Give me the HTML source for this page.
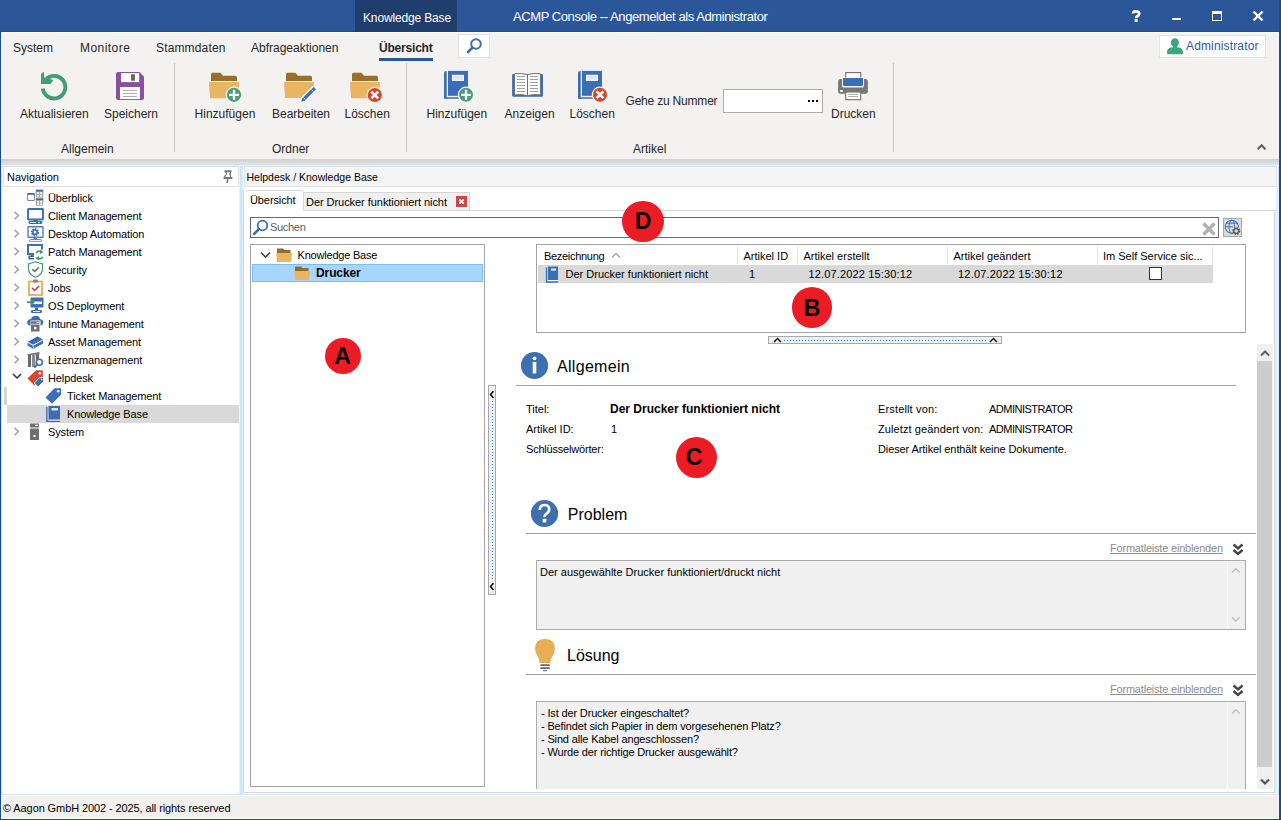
<!DOCTYPE html>
<html><head><meta charset="utf-8"><style>
html,body{margin:0;padding:0;}
body{width:1281px;height:820px;position:relative;overflow:hidden;font-family:"Liberation Sans",sans-serif;}
body>div,body>svg{position:absolute;}
.t{white-space:nowrap;line-height:1;}
</style></head><body>
<div style="left:0px;top:0px;width:1281px;height:820px;background:#1B4C95"></div>
<div style="left:1280px;top:0px;width:1px;height:820px;background:#0050AA"></div>
<div style="left:0px;top:0px;width:1279px;height:31px;background:#2B579A"></div>
<div style="left:0px;top:31px;width:1279px;height:1px;background:#24508F"></div>
<div style="left:355px;top:0px;width:102px;height:32px;background:#1F3D6D"></div>
<div class="t" style="left:363px;top:12.00px;font-size:12px;color:#fff;letter-spacing:-0.15px">Knowledge Base</div>
<div class="t" style="left:513px;top:10.00px;font-size:13px;color:#fff;letter-spacing:-0.42px">ACMP Console -- Angemeldet als Administrator</div>
<svg style="left:1131px;top:10px;" width="10" height="12" viewBox="0 0 10 12"><path d="M2 3.6 Q2 1.3 5 1.3 Q8.2 1.3 8.2 3.8 Q8.2 5.4 6.4 6.3 Q5.1 7 5.1 8.3" fill="none" stroke="#fff" stroke-width="2.7"/><rect x="3.6" y="9.2" width="3" height="2.7" fill="#fff"/></svg>
<div style="left:1172px;top:18px;width:9px;height:2px;background:#fff"></div>
<div style="left:1212px;top:11px;width:10px;height:10px;border:1.5px solid #fff;border-top-width:3px;box-sizing:border-box"></div>
<svg style="left:1252px;top:10px;" width="12" height="12" viewBox="0 0 12 12"><path d="M1.5 1.5 L10.5 10.5 M10.5 1.5 L1.5 10.5" stroke="#fff" stroke-width="2.4"/></svg>
<div style="left:1px;top:32px;width:1278px;height:127px;background:#F3F2F1;border:1px solid #FCFCFA;border-bottom:none;box-sizing:border-box"></div>
<div style="left:1px;top:159px;width:1278px;height:5px;background:linear-gradient(#CFCFCF,#E2E2E2)"></div>
<div style="left:1px;top:164px;width:1278px;height:631px;background:#CCE6FC"></div>
<div style="left:1px;top:165px;width:1278px;height:1px;background:#E0EFFC"></div>
<div style="left:1px;top:795px;width:1278px;height:24px;background:#F1F0EF;border:1px solid #FCFCFA;box-sizing:border-box"></div>
<div class="t" style="left:3px;top:803.00px;font-size:11px;color:#000;letter-spacing:-0.1px">© Aagon GmbH 2002 - 2025, all rights reserved</div>
<div class="t" style="left:13px;top:42.00px;font-size:12px;color:#262626;letter-spacing:0px">System</div>
<div class="t" style="left:80px;top:42.00px;font-size:12px;color:#262626;letter-spacing:0.45px">Monitore</div>
<div class="t" style="left:156px;top:42.00px;font-size:12px;color:#262626;letter-spacing:0.15px">Stammdaten</div>
<div class="t" style="left:251px;top:42.00px;font-size:12px;color:#262626;letter-spacing:0px">Abfrageaktionen</div>
<div class="t" style="left:379px;top:42.00px;font-size:12px;font-weight:bold;color:#262626;letter-spacing:-0.2px">Übersicht</div>
<div style="left:379px;top:58px;width:54px;height:3px;background:#2B579A"></div>
<div style="left:458px;top:34px;width:32px;height:24px;background:#fff;border:1px solid #E3E3E3;box-sizing:border-box"></div>
<svg style="left:466px;top:37px;" width="17" height="17" viewBox="0 0 17 17"><circle cx="10" cy="7" r="4.8" fill="none" stroke="#3C6EB4" stroke-width="2"/><path d="M6.5 10.5 L2 15" stroke="#3C6EB4" stroke-width="2.6" stroke-linecap="round"/></svg>
<div style="left:1159px;top:35px;width:107px;height:23px;background:#fff;border:1px solid #E3E3E3;box-sizing:border-box"></div>
<svg style="left:1166px;top:38px;" width="18" height="17" viewBox="0 0 18 17"><ellipse cx="8.9" cy="4.6" rx="4" ry="4.4" fill="#3FA57A"/><rect x="7" y="7" width="4" height="3" fill="#3FA57A"/><path d="M1 15 Q1 10.2 5 9.6 L7.2 9.2 H10.8 L13 9.6 Q17 10.2 17 15 Q17 16.2 15.5 16.2 H2.5 Q1 16.2 1 15 Z" fill="#3FA57A"/></svg>
<div class="t" style="left:1186px;top:40.00px;font-size:12px;color:#3556A8;letter-spacing:0.15px">Administrator</div>
<div style="left:174px;top:63px;width:1px;height:89px;background:#C6C6C6"></div>
<div style="left:406px;top:63px;width:1px;height:89px;background:#C6C6C6"></div>
<div style="left:893px;top:63px;width:1px;height:89px;background:#C6C6C6"></div>
<div class="t" style="left:20px;top:108.00px;font-size:12px;color:#262626">Aktualisieren</div>
<div class="t" style="left:104px;top:108.00px;font-size:12px;color:#262626">Speichern</div>
<div class="t" style="left:194.6px;top:108.00px;font-size:12px;color:#262626">Hinzufügen</div>
<div class="t" style="left:272px;top:108.00px;font-size:12px;color:#262626">Bearbeiten</div>
<div class="t" style="left:344.5px;top:108.00px;font-size:12px;color:#262626">Löschen</div>
<div class="t" style="left:426.5px;top:108.00px;font-size:12px;color:#262626">Hinzufügen</div>
<div class="t" style="left:504.6px;top:108.00px;font-size:12px;color:#262626">Anzeigen</div>
<div class="t" style="left:569.5px;top:108.00px;font-size:12px;color:#262626">Löschen</div>
<div class="t" style="left:831px;top:108.00px;font-size:12px;color:#262626">Drucken</div>
<div class="t" style="left:625.5px;top:95.00px;font-size:12px;color:#262626;letter-spacing:-0.2px">Gehe zu Nummer</div>
<div class="t" style="left:61px;top:143.00px;font-size:12px;color:#262626">Allgemein</div>
<div class="t" style="left:272px;top:143.00px;font-size:12px;color:#262626">Ordner</div>
<div class="t" style="left:633px;top:143.00px;font-size:12px;color:#262626">Artikel</div>
<div style="left:723px;top:89px;width:100px;height:24px;background:#fff;border:1px solid #ABABAB;box-sizing:border-box"></div>
<div style="left:808px;top:100px;width:2px;height:2px;background:#000"></div>
<div style="left:812px;top:100px;width:2px;height:2px;background:#000"></div>
<div style="left:816px;top:100px;width:2px;height:2px;background:#000"></div>
<svg style="left:1256px;top:143px;" width="12" height="8" viewBox="0 0 12 8"><path d="M1.7 6.3 L5.6 2.3 L9.5 6.3" fill="none" stroke="#5E5E5E" stroke-width="2"/></svg>
<svg style="left:38px;top:70px;" width="32" height="32" viewBox="0 0 32 32"><path d="M4.8 18.6 A11.3 11.3 0 1 0 8.3 8.9" fill="none" stroke="#479B78" stroke-width="3.9"/><path d="M3 4 L6 1.8 L6.2 7.5 L15.5 10 L12.5 14 L3 14 Z" fill="#479B78"/></svg>
<svg style="left:116px;top:72px;" width="28" height="28" viewBox="0 0 28 28"><path d="M2 0 H23.5 L28 4.5 V26 Q28 28 26 28 H2 Q0 28 0 26 V2 Q0 0 2 0 Z" fill="#8A4FA0"/><rect x="5" y="1.1" width="18.2" height="9" fill="#fff"/><rect x="15" y="2.2" width="4" height="6.5" rx="0.5" fill="#676767"/><rect x="4" y="15" width="20" height="12.1" fill="#fff"/><path d="M7 18.4 H20.8 M7 21.4 H20.8 M7 24.5 H20.8" stroke="#ABABAB" stroke-width="1"/></svg>
<svg style="left:205px;top:70px;" width="40" height="36" viewBox="0 0 40 36"><g transform="translate(4,2.7)"><path d="M3.5 0 H11.5 L14 3 H26.5 Q28 3 28 4.5 V8.3 H2 V1.5 Q2 0 3.5 0 Z" fill="#96712B"/><path d="M1 9.2 H29 Q30 9.2 30 10.2 L29 25.5 H1 L0 10.2 Q0 9.2 1 9.2 Z" fill="#E8B562"/></g><circle cx="29" cy="24.8" r="8.299999999999999" fill="#F3F2F1"/><circle cx="29" cy="24.8" r="7.1" fill="#4A9E7B"/><path d="M24 24.8 H34 M29 19.8 V29.8" stroke="#fff" stroke-width="2.3"/></svg>
<svg style="left:280px;top:70px;" width="40" height="36" viewBox="0 0 40 36"><path d="M7.5 2.7 H15.5 L18 5.7 H30.5 Q32 5.7 32 7.2 V11 H6 V4.2 Q6 2.7 7.5 2.7 Z" fill="#96712B"/><path d="M5 11.9 H33 Q34 11.9 34 12.9 V15.8 L22.3 27.9 H5 L4 12.9 Q4 11.9 5 11.9 Z" fill="#E8B562"/><path d="M22.2 30.8 L35.3 17.7" stroke="#F3F2F1" stroke-width="6"/><path d="M23.4 29.6 L34.8 18.2" stroke="#3C6EB4" stroke-width="3.3"/><path d="M21.2 31.8 L22.3 27.9 L25.1 30.7 Z" fill="#3C6EB4"/><path d="M31.6 19.6 L33.4 21.4 M23.6 27.6 L25.4 29.4" stroke="#F3F2F1" stroke-width="0.8"/></svg>
<svg style="left:346px;top:70px;" width="40" height="36" viewBox="0 0 40 36"><g transform="translate(4,2.7)"><path d="M3.5 0 H11.5 L14 3 H26.5 Q28 3 28 4.5 V8.3 H2 V1.5 Q2 0 3.5 0 Z" fill="#96712B"/><path d="M1 9.2 H29 Q30 9.2 30 10.2 L29 25.5 H1 L0 10.2 Q0 9.2 1 9.2 Z" fill="#E8B562"/></g><circle cx="28.8" cy="25" r="8.299999999999999" fill="#F3F2F1"/><circle cx="28.8" cy="25" r="7.1" fill="#D5472B"/><path d="M25.400000000000002 21.6 L32.2 28.4 M32.2 21.6 L25.400000000000002 28.4" stroke="#fff" stroke-width="2.6"/></svg>
<svg style="left:440px;top:70px;" width="40" height="36" viewBox="0 0 40 36"><path d="M4 3 Q4 0.9 6.7 0.9 V28.7 H4 Z" fill="#3C6EB4"/><rect x="8" y="0.9" width="20" height="24.9" fill="#3C6EB4"/><path d="M4 27.2 H20 V28.7 H6 Q4 28.7 4 27.2 Z" fill="#3C6EB4"/><rect x="11.9" y="4.8" width="12.1" height="6.1" fill="#fff"/><rect x="13" y="5.9" width="9.9" height="3.9" fill="#DCE6F0"/><circle cx="26" cy="24.8" r="8.2" fill="#F3F2F1"/><circle cx="26" cy="24.8" r="7" fill="#4A9E7B"/><path d="M21 24.8 H31 M26 19.8 V29.8" stroke="#fff" stroke-width="2.3"/></svg>
<svg style="left:574px;top:70px;" width="40" height="36" viewBox="0 0 40 36"><path d="M4 3 Q4 0.9 6.7 0.9 V28.7 H4 Z" fill="#3C6EB4"/><rect x="8" y="0.9" width="20" height="24.9" fill="#3C6EB4"/><path d="M4 27.2 H20 V28.7 H6 Q4 28.7 4 27.2 Z" fill="#3C6EB4"/><rect x="11.9" y="4.8" width="12.1" height="6.1" fill="#fff"/><rect x="13" y="5.9" width="9.9" height="3.9" fill="#DCE6F0"/><circle cx="26" cy="24.8" r="8.2" fill="#F3F2F1"/><circle cx="26" cy="24.8" r="7" fill="#D5472B"/><path d="M22.6 21.400000000000002 L29.4 28.2 M29.4 21.400000000000002 L22.6 28.2" stroke="#fff" stroke-width="2.6"/></svg>
<svg style="left:510px;top:72px;" width="34" height="26" viewBox="0 0 34 26"><rect x="2.1" y="2" width="30.9" height="22.7" rx="1.2" fill="#3C6EB4"/><path d="M4.6 1.8 Q11 0.8 17.5 2.6 V23.6 Q11 22 4.6 22.9 Z" fill="#fff" stroke="#707070" stroke-width="1"/><path d="M30.4 1.8 Q24 0.8 17.5 2.6 V23.6 Q24 22 30.4 22.9 Z" fill="#fff" stroke="#707070" stroke-width="1"/><path d="M7 4.5 H15 M20 4.5 H28 M7 7.5 H15 M20 7.5 H28 M7 10.5 H15 M20 10.5 H28 M7 13.5 H15 M20 13.5 H28 M7 16.5 H15 M20 16.5 H28 M7 19.5 H15 M20 19.5 H28" stroke="#A0A0A0" stroke-width="1"/></svg>
<svg style="left:836px;top:71px;" width="33" height="30" viewBox="0 0 33 30"><rect x="9.7" y="1.6" width="15" height="9" fill="#fff" stroke="#707070" stroke-width="1.1"/><rect x="2.1" y="7.9" width="29.8" height="14.9" rx="2.5" fill="#777"/><rect x="6" y="7" width="22" height="9.6" rx="2.2" fill="#F3F2F1"/><rect x="6" y="6.5" width="22" height="3" fill="#F3F2F1"/><rect x="7" y="7" width="20" height="8" rx="1.6" fill="#3C6EB4"/><rect x="7" y="7" width="20" height="3" fill="#3C6EB4"/><rect x="4" y="18.9" width="3" height="2" rx="0.8" fill="#fff"/><rect x="9.7" y="21" width="15" height="7.7" fill="#fff" stroke="#707070" stroke-width="1.1"/><path d="M12.2 23.4 H22 M12.2 25.5 H22" stroke="#A0A0A0" stroke-width="0.9"/></svg>
<div style="left:2px;top:166px;width:237px;height:628px;background:#fff"></div>
<div style="left:3px;top:166px;width:236px;height:21px;background:#fff;border:1px solid #E0E0E0;box-sizing:border-box"></div>
<div class="t" style="left:7px;top:172.00px;font-size:11px;color:#000">Navigation</div>
<svg style="left:221px;top:169px;" width="14" height="16" viewBox="0 0 14 16"><path d="M3.5 2.2 H10.5 M2.6 9 H11.4" stroke="#777" stroke-width="1.9"/><path d="M4.3 3 Q6.2 4.8 4.8 6.2 L3.2 8.2 M9.5 3 V8.2" fill="none" stroke="#777" stroke-width="1.2"/><rect x="8" y="4" width="1.5" height="2.5" fill="#999"/><path d="M6.6 10 L6.2 14" stroke="#777" stroke-width="1.6"/></svg>
<div style="left:7px;top:405px;width:232px;height:18px;background:#D9D9D9"></div>
<div style="left:4px;top:387px;width:3px;height:18px;background:#D4D4D4"></div>
<div class="t" style="left:48px;top:193.00px;font-size:11px;color:#000;letter-spacing:-0.12px">Überblick</div>
<div class="t" style="left:48px;top:211.00px;font-size:11px;color:#000;letter-spacing:-0.12px">Client Management</div>
<svg style="left:13px;top:211px;" width="8" height="9" viewBox="0 0 8 9"><path d="M1.5 0.8 L5.5 4.5 L1.5 8.2" fill="none" stroke="#9C9C9C" stroke-width="1.4"/></svg>
<div class="t" style="left:48px;top:229.00px;font-size:11px;color:#000;letter-spacing:-0.12px">Desktop Automation</div>
<svg style="left:13px;top:229px;" width="8" height="9" viewBox="0 0 8 9"><path d="M1.5 0.8 L5.5 4.5 L1.5 8.2" fill="none" stroke="#9C9C9C" stroke-width="1.4"/></svg>
<div class="t" style="left:48px;top:247.00px;font-size:11px;color:#000;letter-spacing:-0.12px">Patch Management</div>
<svg style="left:13px;top:247px;" width="8" height="9" viewBox="0 0 8 9"><path d="M1.5 0.8 L5.5 4.5 L1.5 8.2" fill="none" stroke="#9C9C9C" stroke-width="1.4"/></svg>
<div class="t" style="left:48px;top:265.00px;font-size:11px;color:#000;letter-spacing:-0.12px">Security</div>
<svg style="left:13px;top:265px;" width="8" height="9" viewBox="0 0 8 9"><path d="M1.5 0.8 L5.5 4.5 L1.5 8.2" fill="none" stroke="#9C9C9C" stroke-width="1.4"/></svg>
<div class="t" style="left:48px;top:283.00px;font-size:11px;color:#000;letter-spacing:-0.12px">Jobs</div>
<svg style="left:13px;top:283px;" width="8" height="9" viewBox="0 0 8 9"><path d="M1.5 0.8 L5.5 4.5 L1.5 8.2" fill="none" stroke="#9C9C9C" stroke-width="1.4"/></svg>
<div class="t" style="left:48px;top:301.00px;font-size:11px;color:#000;letter-spacing:-0.12px">OS Deployment</div>
<svg style="left:13px;top:301px;" width="8" height="9" viewBox="0 0 8 9"><path d="M1.5 0.8 L5.5 4.5 L1.5 8.2" fill="none" stroke="#9C9C9C" stroke-width="1.4"/></svg>
<div class="t" style="left:48px;top:319.00px;font-size:11px;color:#000;letter-spacing:-0.12px">Intune Management</div>
<svg style="left:13px;top:319px;" width="8" height="9" viewBox="0 0 8 9"><path d="M1.5 0.8 L5.5 4.5 L1.5 8.2" fill="none" stroke="#9C9C9C" stroke-width="1.4"/></svg>
<div class="t" style="left:48px;top:337.00px;font-size:11px;color:#000;letter-spacing:-0.12px">Asset Management</div>
<svg style="left:13px;top:337px;" width="8" height="9" viewBox="0 0 8 9"><path d="M1.5 0.8 L5.5 4.5 L1.5 8.2" fill="none" stroke="#9C9C9C" stroke-width="1.4"/></svg>
<div class="t" style="left:48px;top:355.00px;font-size:11px;color:#000;letter-spacing:-0.12px">Lizenzmanagement</div>
<svg style="left:13px;top:355px;" width="8" height="9" viewBox="0 0 8 9"><path d="M1.5 0.8 L5.5 4.5 L1.5 8.2" fill="none" stroke="#9C9C9C" stroke-width="1.4"/></svg>
<div class="t" style="left:48px;top:373.00px;font-size:11px;color:#000;letter-spacing:-0.12px">Helpdesk</div>
<svg style="left:12px;top:373px;" width="10" height="7" viewBox="0 0 10 7"><path d="M1 1 L5 5 L9 1" fill="none" stroke="#333" stroke-width="1.5"/></svg>
<div class="t" style="left:67px;top:391.00px;font-size:11px;color:#000;letter-spacing:-0.12px">Ticket Management</div>
<div class="t" style="left:67px;top:409.00px;font-size:11px;color:#000;letter-spacing:-0.12px">Knowledge Base</div>
<div class="t" style="left:48px;top:427.00px;font-size:11px;color:#000;letter-spacing:-0.12px">System</div>
<svg style="left:13px;top:427px;" width="8" height="9" viewBox="0 0 8 9"><path d="M1.5 0.8 L5.5 4.5 L1.5 8.2" fill="none" stroke="#9C9C9C" stroke-width="1.4"/></svg>
<svg style="left:27px;top:189px;" width="17" height="17" viewBox="0 0 17 17"><rect x="0.5" y="4.5" width="7" height="7" rx="1" fill="#fff" stroke="#8A8A8A" stroke-width="1.1"/><rect x="0.5" y="4" width="7" height="1.8" fill="#3C6EB4"/><rect x="8.8" y="1" width="7.5" height="7.5" rx="1" fill="#A0A0A0"/><rect x="8.8" y="0.6" width="7.5" height="1.8" fill="#3C6EB4"/><rect x="8.8" y="9.5" width="7.5" height="7.3" rx="1" fill="#A0A0A0"/><rect x="8.8" y="9.3" width="7.5" height="1.8" fill="#3C6EB4"/><rect x="10" y="3.2" width="2.2" height="1.8" fill="#fff"/><rect x="13" y="3.2" width="2.2" height="1.8" fill="#fff"/><rect x="10" y="5.8" width="2.2" height="1.8" fill="#fff"/><rect x="13" y="5.8" width="2.2" height="1.8" fill="#fff"/><rect x="10" y="11.8" width="2.2" height="1.8" fill="#fff"/><rect x="13" y="11.8" width="2.2" height="1.8" fill="#fff"/><rect x="10" y="14.4" width="2.2" height="1.6" fill="#fff"/><rect x="13" y="14.4" width="2.2" height="1.6" fill="#fff"/></svg>
<svg style="left:27px;top:207px;" width="17" height="17" viewBox="0 0 17 17"><rect x="1" y="2" width="15" height="10.5" rx="0.5" fill="none" stroke="#3C6EB4" stroke-width="1.9"/><rect x="6.5" y="12.5" width="4" height="1.6" fill="#3C6EB4"/><rect x="1.5" y="14" width="14" height="3" rx="1.4" fill="#3C6EB4"/><rect x="3" y="15.1" width="6" height="0.9" fill="#fff"/><rect x="11" y="15.1" width="2" height="0.9" fill="#fff"/></svg>
<svg style="left:27px;top:225px;" width="17" height="17" viewBox="0 0 17 17"><rect x="1" y="1.7" width="15" height="10.6" rx="0.5" fill="none" stroke="#4F7FC0" stroke-width="1.4"/><circle cx="8" cy="7.2" r="2.9" fill="none" stroke="#3C6EB4" stroke-width="2.4" stroke-dasharray="1.3 0.9"/><circle cx="8" cy="7.2" r="2.2" fill="none" stroke="#3C6EB4" stroke-width="1.6"/><rect x="6.5" y="12.6" width="3.5" height="1.6" fill="#4F7FC0"/><rect x="2.5" y="14.6" width="12" height="2.2" rx="1.1" fill="none" stroke="#4F7FC0" stroke-width="1"/></svg>
<svg style="left:27px;top:243px;" width="17" height="17" viewBox="0 0 17 17"><path d="M7 11 H1 V2 H15 V6.5" fill="none" stroke="#3C6EB4" stroke-width="2"/><rect x="4" y="11" width="2.5" height="2" fill="#3C6EB4"/><path d="M7 13.2 H2.2 V15.6 H7" fill="none" stroke="#3C6EB4" stroke-width="1.6"/><path d="M9 10 Q11 7.5 14.5 8.5" fill="none" stroke="#3E9A73" stroke-width="1.7"/><path d="M13 6.5 L16.5 9.3 L13 11 Z" fill="#3E9A73"/><path d="M16 14 Q14 16.5 10.5 15.5" fill="none" stroke="#3E9A73" stroke-width="1.7"/><path d="M12 13 L8.5 15 L12 17.5 Z" fill="#3E9A73"/></svg>
<svg style="left:27px;top:261px;" width="17" height="17" viewBox="0 0 17 17"><path d="M8.5 0.8 L15.5 3 V8 Q15.5 13.5 8.5 16.2 Q1.5 13.5 1.5 8 V3 Z" fill="none" stroke="#3E9A73" stroke-width="1.2"/><path d="M5.2 8.2 L7.7 10.5 L11.8 6.2" fill="none" stroke="#666" stroke-width="1.5"/></svg>
<svg style="left:27px;top:279px;" width="17" height="17" viewBox="0 0 17 17"><rect x="2" y="2.5" width="13" height="13.5" fill="#fff" stroke="#E8AE55" stroke-width="1.8"/><rect x="6" y="0.5" width="5" height="3" rx="1" fill="#888"/><path d="M5 9 L7.7 11.5 L12 7" fill="none" stroke="#D33B2C" stroke-width="1.6"/></svg>
<svg style="left:27px;top:297px;" width="17" height="17" viewBox="0 0 17 17"><rect x="3.5" y="0.5" width="13" height="10" rx="1" fill="#3C6EB4"/><rect x="6" y="4.5" width="9" height="2.6" fill="#fff"/><rect x="8" y="10.5" width="3" height="2.5" fill="#3C6EB4"/><rect x="4" y="13" width="11" height="3" rx="1.3" fill="#3C6EB4"/><rect x="6" y="14" width="7" height="0.9" fill="#fff"/><path d="M0 5.2 H6" stroke="#3E9A73" stroke-width="1.8"/><path d="M4.5 2.2 L8 5.2 L4.5 8.2 Z" fill="#3E9A73"/></svg>
<svg style="left:27px;top:315px;" width="17" height="17" viewBox="0 0 17 17"><path d="M2.5 10.5 Q0 10 0.3 6.8 Q0.8 4 4 4 Q5 0.8 9 0.8 Q12.5 1 13.2 4.2 Q16.5 4.5 16.3 7.5 Q16 10 13.5 10.5 V5.5 H3.5 V10.5 Z" fill="#3C6EB4"/><rect x="4" y="6.2" width="8.5" height="2.6" fill="#6E6E6E"/><rect x="9.5" y="6.9" width="2.2" height="1.1" fill="#fff"/><rect x="4" y="9.5" width="8.5" height="7" fill="#6E6E6E"/><rect x="7" y="11.8" width="2.5" height="2.5" fill="#fff"/></svg>
<svg style="left:27px;top:333px;" width="17" height="17" viewBox="0 0 17 17"><path d="M0.5 9 L10.5 3.5 L16 6.5 L6 12 Z" fill="#3C6EB4"/><path d="M0.5 9.5 V12.5 L6 15.8 V12.5 Z" fill="#3C6EB4"/><path d="M6.5 12.5 V15.8 L16 10.5 V7 Z" fill="#3C6EB4"/><path d="M0.8 9.4 L6.2 12.3 L15.8 7" fill="none" stroke="#fff" stroke-width="0.8"/><path d="M6.2 12.3 V16" stroke="#9BB8E0" stroke-width="0.8"/><path d="M2.5 8.8 L10.5 4.2" stroke="#3060A0" stroke-width="0.6"/></svg>
<svg style="left:27px;top:351px;" width="17" height="17" viewBox="0 0 17 17"><path d="M0.5 3 L12.5 1 V3.2 L0.5 4.5 Z" fill="#7A7A7A"/><rect x="1" y="4" width="3" height="12" fill="#6A6A6A"/><rect x="5" y="3.5" width="3.2" height="12.5" fill="#8A8A8A"/><rect x="9" y="3" width="3" height="8" fill="#6A6A6A"/><circle cx="12.3" cy="11.2" r="3" fill="#fff" stroke="#3C6EB4" stroke-width="1.6"/><path d="M10.2 13.3 L7.8 16" stroke="#3C6EB4" stroke-width="1.9" stroke-linecap="round"/></svg>
<svg style="left:27px;top:369px;" width="17" height="17" viewBox="0 0 17 17"><path d="M0.5 9.5 L9 1.2 H15.8 V8 L7.5 16.5 Z" fill="#D6492F"/><circle cx="12.8" cy="4.2" r="1.3" fill="#fff"/><path d="M7.2 14 L12.5 8.6 H16.6 V12.6 L11.2 18 Z" fill="#3C6EB4" stroke="#fff" stroke-width="1"/><circle cx="14.6" cy="10.6" r="0.8" fill="#fff"/></svg>
<svg style="left:45px;top:387px;" width="17" height="17" viewBox="0 0 17 17"><path d="M0.5 10.5 L9.5 1.2 H16 V7.8 L7 16.8 Z" fill="#3C6EB4"/><circle cx="13.2" cy="4.2" r="1.3" fill="#fff"/></svg>
<svg style="left:45px;top:405px;" width="17" height="17" viewBox="0 0 17 17"><path d="M3.5 1 H15 V15 H3.5 Z" fill="#3C6EB4"/><path d="M1.8 2 V16.2 H15" fill="none" stroke="#3C6EB4" stroke-width="1.4"/><rect x="3.5" y="14.6" width="11.5" height="0.9" fill="#fff"/><rect x="6.5" y="3" width="6.5" height="2.5" fill="#D6E4F0"/></svg>
<svg style="left:27px;top:423px;" width="17" height="17" viewBox="0 0 17 17"><rect x="3" y="0.5" width="9" height="4" fill="#707070"/><rect x="8" y="1.7" width="3" height="1.3" fill="#fff"/><rect x="3" y="5.5" width="9" height="11.5" fill="#707070"/><rect x="6.5" y="12" width="2" height="2" fill="#fff"/></svg>
<div style="left:239px;top:166px;width:4px;height:627px;background:linear-gradient(90deg,#EAF5FE 0 1px,#CCE6FC 1px 3px,#DCEEFC 3px 4px)"></div>
<div style="left:243px;top:166px;width:1035px;height:628px;background:#fff"></div>
<div style="left:1275px;top:210px;width:1px;height:583px;background:#EFEFEF"></div>
<div style="left:1276px;top:187px;width:3px;height:606px;background:#E0F1FD"></div>
<div style="left:244px;top:166px;width:1033px;height:21px;background:#F5F5F5;border:1px solid #E2E2E2;box-sizing:border-box"></div>
<div class="t" style="left:246.5px;top:172.00px;font-size:10.5px;color:#000">Helpdesk / Knowledge Base</div>
<div style="left:243px;top:210px;width:1032px;height:583px;background:#fff;border:1px solid #D6D6D6;box-sizing:border-box"></div>
<div style="left:243px;top:190px;width:1px;height:20px;background:#D6D6D6"></div>
<div style="left:303px;top:192px;width:167px;height:18px;background:#F0F0F0;border:1px solid #D6D6D6;border-bottom:none;box-sizing:border-box"></div>
<div style="left:244px;top:190px;width:59px;height:21px;background:#fff"></div>
<div style="left:247px;top:190px;width:56px;height:1px;background:#D6D6D6"></div>
<div class="t" style="left:250px;top:195.00px;font-size:11px;color:#000;letter-spacing:-0.1px">Übersicht</div>
<div class="t" style="left:306px;top:197.00px;font-size:11px;color:#000;letter-spacing:-0.05px">Der Drucker funktioniert nicht</div>
<div style="left:456px;top:196px;width:11px;height:11px;background:#CC4646"></div>
<svg style="left:456px;top:196px;" width="11" height="11" viewBox="0 0 11 11"><path d="M3.3 3.5 L7.7 7.5 M7.7 3.5 L3.3 7.5" stroke="#fff" stroke-width="1.7"/></svg>
<div style="left:250px;top:217px;width:969px;height:21px;background:#fff;border:1px solid #6A6A6A;box-sizing:border-box"></div>
<svg style="left:252px;top:219px;" width="17" height="17" viewBox="0 0 17 17"><circle cx="10.5" cy="6.5" r="4.8" fill="none" stroke="#3C6EB4" stroke-width="1.8"/><path d="M7 10 L2 15" stroke="#3C6EB4" stroke-width="2.5" stroke-linecap="round"/></svg>
<div class="t" style="left:270px;top:222.00px;font-size:11px;color:#5E5E5E;letter-spacing:-0.3px">Suchen</div>
<svg style="left:1201px;top:221px;" width="16" height="16" viewBox="0 0 16 16"><path d="M2.5 2.5 L13.5 13.5 M13.5 2.5 L2.5 13.5" stroke="#B0B0B0" stroke-width="3.2"/></svg>
<div style="left:1223px;top:218px;width:19px;height:19px;background:#DADADA;border:1px solid #A8A8A8;box-sizing:border-box"></div>
<svg style="left:1224px;top:219px;" width="17" height="17" viewBox="0 0 17 17"><circle cx="7.8" cy="7.8" r="6.6" fill="none" stroke="#3C78C8" stroke-width="1.1"/><ellipse cx="7.8" cy="7.8" rx="2.8" ry="6.6" fill="none" stroke="#3C78C8" stroke-width="1"/><path d="M1.2 7.8 H9 M2.2 4.2 H13.4" stroke="#3C78C8" stroke-width="1"/><circle cx="12.2" cy="12" r="4.3" fill="#DADADA"/><circle cx="12.2" cy="12" r="3.2" fill="none" stroke="#5A5A5A" stroke-width="1.8" stroke-dasharray="1.5 1"/><circle cx="12.2" cy="12" r="2.4" fill="none" stroke="#5A5A5A" stroke-width="1.4"/></svg>
<div style="left:250px;top:244px;width:235px;height:543px;background:#fff;border:1px solid #A3A3A8;box-sizing:border-box"></div>
<svg style="left:260px;top:251px;" width="11" height="8" viewBox="0 0 11 8"><path d="M1 1.5 L5.5 6 L10 1.5" fill="none" stroke="#444" stroke-width="1.6"/></svg>
<svg style="left:276px;top:248px;" width="17" height="15" viewBox="0 0 17 15"><path d="M1 0.5 H7 L8.5 2 H14.5 V5 H1 Z" fill="#8E6E2B"/><path d="M0.2 5 H16 L15.2 14 H1 Z" fill="#E8B562"/></svg>
<div class="t" style="left:297.5px;top:250.00px;font-size:11px;color:#000;letter-spacing:-0.2px">Knowledge Base</div>
<div style="left:252px;top:264px;width:231px;height:18px;background:#A6D6FC;border:1px solid #78BEF7;box-sizing:border-box"></div>
<svg style="left:294px;top:266px;" width="17" height="15" viewBox="0 0 17 15"><path d="M1 0.5 H7 L8.5 2 H14.5 V5 H1 Z" fill="#8E6E2B"/><path d="M0.2 5 H16 L15.2 14 H1 Z" fill="#E8B562"/></svg>
<div class="t" style="left:316px;top:267.00px;font-size:12px;font-weight:bold;color:#000;letter-spacing:-0.1px">Drucker</div>
<div style="left:488px;top:385px;width:8px;height:210px;background:#F0F0F0;border:1px solid #A8A8A8;box-sizing:border-box"></div>
<svg style="left:489px;top:390px;" width="6" height="10" viewBox="0 0 6 10"><path d="M4.4 1.3 L1.6 4.6 L4.4 7.9" fill="none" stroke="#000" stroke-width="1.5"/></svg>
<svg style="left:489px;top:582px;" width="6" height="10" viewBox="0 0 6 10"><path d="M4.4 1.3 L1.6 4.6 L4.4 7.9" fill="none" stroke="#000" stroke-width="1.5"/></svg>
<div style="left:492px;top:401px;width:1px;height:178px;background:repeating-linear-gradient(#1E88E5 0 1px,transparent 1px 3px)"></div>
<div style="left:536px;top:244px;width:710px;height:89px;background:#fff;border:1px solid #A3A3A8;box-sizing:border-box"></div>
<div style="left:737px;top:246px;width:1px;height:19px;background:#E5E5E5"></div>
<div style="left:797px;top:246px;width:1px;height:19px;background:#E5E5E5"></div>
<div style="left:947px;top:246px;width:1px;height:19px;background:#E5E5E5"></div>
<div style="left:1097px;top:246px;width:1px;height:19px;background:#E5E5E5"></div>
<div style="left:1212px;top:246px;width:1px;height:19px;background:#E5E5E5"></div>
<div class="t" style="left:544px;top:251.00px;font-size:11px;color:#000;letter-spacing:-0.3px">Bezeichnung</div>
<svg style="left:611px;top:252px;" width="10" height="7" viewBox="0 0 10 7"><path d="M1 5.5 L5 1.5 L9 5.5" fill="none" stroke="#555" stroke-width="1"/></svg>
<div class="t" style="left:743.5px;top:251.00px;font-size:11px;color:#000">Artikel ID</div>
<div class="t" style="left:803.5px;top:251.00px;font-size:11px;color:#000">Artikel erstellt</div>
<div class="t" style="left:953.5px;top:251.00px;font-size:11px;color:#000">Artikel geändert</div>
<div class="t" style="left:1103px;top:251.00px;font-size:11px;color:#000">Im Self Service sic...</div>
<div style="left:538px;top:265px;width:675px;height:18px;background:#D9D9D9"></div>
<svg style="left:545px;top:266px;" width="14" height="17" viewBox="0 0 14 17"><path d="M3 0.5 H13 V14 H3 Z" fill="#3C6EB4"/><path d="M1.5 1.5 V16 H13" fill="none" stroke="#3C6EB4" stroke-width="1.3"/><rect x="3" y="14" width="10" height="1" fill="#fff"/><rect x="6" y="2.5" width="5" height="2.2" fill="#D6E4F0"/></svg>
<div class="t" style="left:565.5px;top:269.00px;font-size:11px;color:#000">Der Drucker funktioniert nicht</div>
<div class="t" style="left:749px;top:269.00px;font-size:11px;color:#000">1</div>
<div class="t" style="left:808.5px;top:269.00px;font-size:11px;color:#000;letter-spacing:0.15px">12.07.2022 15:30:12</div>
<div class="t" style="left:958px;top:269.00px;font-size:11px;color:#000;letter-spacing:0.2px">12.07.2022 15:30:12</div>
<div style="left:1149px;top:267px;width:13px;height:13px;background:#fff;border:1px solid #333;box-sizing:border-box"></div>
<div style="left:768px;top:336px;width:234px;height:8px;background:#F0F0F0;border:1px solid #A8A8A8;box-sizing:border-box"></div>
<svg style="left:773px;top:337px;" width="10" height="6" viewBox="0 0 10 6"><path d="M1 5 L4.5 1.5 L8 5" fill="none" stroke="#000" stroke-width="1.4"/></svg>
<svg style="left:989px;top:337px;" width="10" height="6" viewBox="0 0 10 6"><path d="M1 5 L4.5 1.5 L8 5" fill="none" stroke="#000" stroke-width="1.4"/></svg>
<div style="left:784px;top:340px;width:202px;height:1px;background:repeating-linear-gradient(90deg,#1E88E5 0 1px,transparent 1px 3px)"></div>
<svg style="left:520px;top:351px;" width="29" height="29" viewBox="0 0 29 29"><circle cx="14.5" cy="14.5" r="13.6" fill="#3D70AE"/><circle cx="14.5" cy="7.3" r="1.9" fill="#fff"/><rect x="12.7" y="11" width="3.6" height="11.5" fill="#fff"/></svg>
<div class="t" style="left:557px;top:359.00px;font-size:16px;color:#000;letter-spacing:0.3px">Allgemein</div>
<div style="left:516px;top:385px;width:720px;height:1px;background:#A0A0A0"></div>
<div class="t" style="left:526px;top:404.00px;font-size:11px;color:#000">Titel:</div>
<div class="t" style="left:610px;top:403.00px;font-size:12px;font-weight:bold;color:#000">Der Drucker funktioniert nicht</div>
<div class="t" style="left:526px;top:424.00px;font-size:11px;color:#000">Artikel ID:</div>
<div class="t" style="left:611px;top:424.00px;font-size:11px;color:#000">1</div>
<div class="t" style="left:526px;top:444.00px;font-size:11px;color:#000;letter-spacing:-0.2px">Schlüsselwörter:</div>
<div class="t" style="left:878px;top:404.00px;font-size:11px;color:#000;letter-spacing:0.15px">Erstellt von:</div>
<div class="t" style="left:989px;top:404.00px;font-size:11px;color:#000;letter-spacing:-0.5px">ADMINISTRATOR</div>
<div class="t" style="left:878px;top:424.00px;font-size:11px;color:#000;letter-spacing:0.1px">Zuletzt geändert von:</div>
<div class="t" style="left:989px;top:424.00px;font-size:11px;color:#000;letter-spacing:-0.5px">ADMINISTRATOR</div>
<div class="t" style="left:878px;top:444.00px;font-size:11px;color:#000;letter-spacing:-0.1px">Dieser Artikel enthält keine Dokumente.</div>
<svg style="left:530px;top:499px;" width="29" height="29" viewBox="0 0 29 29"><circle cx="14.5" cy="14.5" r="13.6" fill="#3D70AE"/><path d="M9.8 11 Q9.8 6 14.5 6 Q19.2 6 19.2 10.5 Q19.2 13 16.5 14.6 Q14.5 15.8 14.5 18" fill="none" stroke="#fff" stroke-width="2.6"/><rect x="12.6" y="19.8" width="3.8" height="3.6" fill="#fff"/></svg>
<div class="t" style="left:567.8px;top:507.00px;font-size:16px;color:#000">Problem</div>
<div style="left:526px;top:533px;width:730px;height:1px;background:#A0A0A0"></div>
<div class="t" style="left:1110px;top:543.00px;font-size:11px;color:#8C8C8C;text-decoration:underline;letter-spacing:-0.2px">Formatleiste einblenden</div>
<svg style="left:1232px;top:543px;" width="12" height="14" viewBox="0 0 12 14"><path d="M1.5 1.5 L6 5.5 L10.5 1.5 M1.5 7 L6 11 L10.5 7" fill="none" stroke="#444" stroke-width="2.4"/></svg>
<div style="left:536px;top:560px;width:710px;height:70px;background:#F0F0F0;border:1px solid #ABABAB;box-sizing:border-box"></div>
<div style="left:1227px;top:561px;width:1px;height:68px;background:#fff"></div>
<svg style="left:1231px;top:567px;" width="10" height="7" viewBox="0 0 10 7"><path d="M1 5.5 L4.9 1.7 L8.8 5.5" fill="none" stroke="#BDBDBD" stroke-width="1.3"/></svg>
<svg style="left:1231px;top:616px;" width="10" height="7" viewBox="0 0 10 7"><path d="M1 1.2 L4.9 5 L8.8 1.2" fill="none" stroke="#BDBDBD" stroke-width="1.3"/></svg>
<div class="t" style="left:540px;top:567.00px;font-size:11px;color:#000">Der ausgewählte Drucker funktioniert/druckt nicht</div>
<svg style="left:533px;top:637px;" width="24" height="36" viewBox="0 0 24 36"><path d="M12 1.9 Q22 1.9 22 11.5 Q22 16 18.8 20.3 Q17.5 22.5 17.5 26 H6.5 Q6.5 22.5 5.2 20.3 Q2 16 2 11.5 Q2 1.9 12 1.9 Z" fill="#E8AE55"/><rect x="7.3" y="27.2" width="9.5" height="1.9" rx="0.6" fill="#666"/><rect x="7.3" y="30.2" width="9.5" height="1.9" rx="0.6" fill="#666"/><rect x="10" y="33.1" width="4" height="1.1" fill="#666"/></svg>
<div class="t" style="left:567px;top:648.00px;font-size:16px;color:#000">Lösung</div>
<div style="left:526px;top:674px;width:730px;height:1px;background:#A0A0A0"></div>
<div class="t" style="left:1110px;top:684.00px;font-size:11px;color:#8C8C8C;text-decoration:underline;letter-spacing:-0.2px">Formatleiste einblenden</div>
<svg style="left:1232px;top:684px;" width="12" height="14" viewBox="0 0 12 14"><path d="M1.5 1.5 L6 5.5 L10.5 1.5 M1.5 7 L6 11 L10.5 7" fill="none" stroke="#444" stroke-width="2.4"/></svg>
<div style="left:536px;top:701px;width:710px;height:91px;background:#F0F0F0;border:1px solid #ABABAB;box-sizing:border-box"></div>
<div style="left:1227px;top:702px;width:1px;height:89px;background:#fff"></div>
<svg style="left:1231px;top:708px;" width="10" height="7" viewBox="0 0 10 7"><path d="M1 5.5 L4.9 1.7 L8.8 5.5" fill="none" stroke="#BDBDBD" stroke-width="1.3"/></svg>
<div class="t" style="left:541px;top:708.00px;font-size:11px;color:#000;letter-spacing:-0.15px">- Ist der Drucker eingeschaltet?</div>
<div class="t" style="left:541px;top:721.00px;font-size:11px;color:#000;letter-spacing:-0.15px">- Befindet sich Papier in dem vorgesehenen Platz?</div>
<div class="t" style="left:541px;top:734.00px;font-size:11px;color:#000;letter-spacing:-0.15px">- Sind alle Kabel angeschlossen?</div>
<div class="t" style="left:541px;top:747.00px;font-size:11px;color:#000;letter-spacing:-0.15px">- Wurde der richtige Drucker ausgewählt?</div>
<div style="left:526px;top:789px;width:748px;height:3px;background:#fff"></div>
<div style="left:1257px;top:344px;width:16px;height:445px;background:#F0F0F0"></div>
<div style="left:1257px;top:361px;width:15px;height:406px;background:#CDCDCD"></div>
<svg style="left:1259px;top:349px;" width="12" height="8" viewBox="0 0 12 8"><path d="M2 6.5 L6 2.5 L10 6.5" fill="none" stroke="#606060" stroke-width="2"/></svg>
<svg style="left:1259px;top:778px;" width="12" height="8" viewBox="0 0 12 8"><path d="M2 1.5 L6 5.5 L10 1.5" fill="none" stroke="#555" stroke-width="2.2"/></svg>
<div style="left:622.25px;top:200.65px;width:41.5px;height:41.5px;border-radius:50%;background:#EC1C24"></div>
<div class="t" style="left:633px;top:210.00px;font-size:23px;font-weight:bold;color:#000;width:20px;text-align:center">D</div>
<div style="left:791.75px;top:287.15px;width:40.5px;height:40.5px;border-radius:50%;background:#EC1C24"></div>
<div class="t" style="left:802px;top:297.00px;font-size:23px;font-weight:bold;color:#000;width:20px;text-align:center">B</div>
<div style="left:324.5px;top:338.4px;width:36px;height:36px;border-radius:50%;background:#EC1C24"></div>
<div class="t" style="left:332.5px;top:345.00px;font-size:23px;font-weight:bold;color:#000;width:20px;text-align:center">A</div>
<div style="left:675.5px;top:436.8px;width:41px;height:41px;border-radius:50%;background:#EC1C24"></div>
<div class="t" style="left:684px;top:446.00px;font-size:23px;font-weight:bold;color:#000;width:20px;text-align:center">C</div>
</body></html>
